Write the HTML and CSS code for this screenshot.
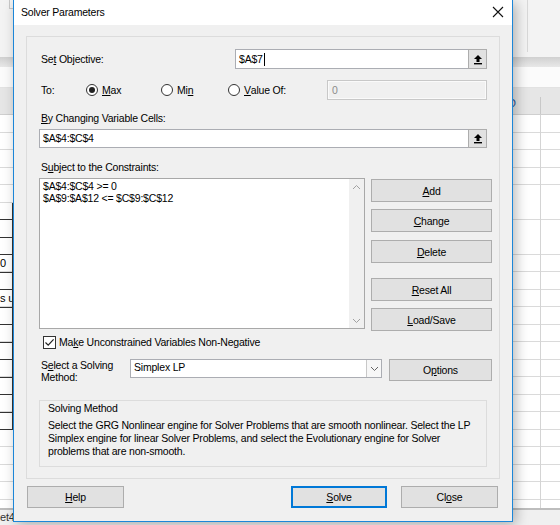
FILE: index.html
```html
<!DOCTYPE html>
<html lang="en">
<head>
    <meta charset="UTF-8">
    <title>Solver Parameters</title>
    <link rel="stylesheet" href="styles.css">
</head>
<body>

    <!-- excel window behind the dialog -->
    <div class="excel">
        <div class="ribbon"><span class="ribbon-corner"></span><span class="ribbon-sep"></span></div>
        <div class="ribbon-edge"></div>
        <div class="formula-bar"></div>
        <div class="col-head"><span class="col-letter">D</span></div>
        <div class="grid">
            <div class="left-cells">
                <div class="cell"></div>
                <div class="cell"></div>
                <div class="cell"></div>
                <div class="cell"></div>
                <div class="cell"></div>
                <div class="cell dark"></div>
                <div class="cell dark"></div>
                <div class="cell dark"></div>
                <div class="cell dark">0</div>
                <div class="cell dark"></div>
                <div class="cell dark">s u</div>
                <div class="cell dark"></div>
                <div class="cell dark"></div>
                <div class="cell dark"></div>
                <div class="cell dark"></div>
                <div class="cell dark"></div>
                <div class="cell dark"></div>
                <div class="cell dark"></div>
            </div>
        </div>
        <div class="tabs"><span class="tab-text">et4</span></div>
    </div>

    <div class="dialog">
        <div class="titlebar">
            <span class="title">Solver Parameters</span>
            <svg class="close" width="12" height="12" viewBox="0 0 12 12">
                <path d="M1 1 L11 11 M11 1 L1 11" stroke="#111" stroke-width="1.1" fill="none"/>
            </svg>
        </div>

        <div class="dlg-body">
            <div class="frame">

                <div class="row row-objective">
                    <span class="lbl w-objective">Se<u>t</u> Objective:</span>
                    <div class="ref-input w-objective-input">
                        <span class="ref-val">$A$7</span><span class="caret"></span>
                        <span class="collapse">
                            <svg width="10" height="11" viewBox="0 0 10 11">
                                <path d="M5 1 L9 5 L6.5 5 L6.5 8 L3.5 8 L3.5 5 L1 5 Z" fill="#000"/>
                                <rect x="1" y="9" width="8" height="1.4" fill="#000"/>
                            </svg>
                        </span>
                    </div>
                </div>

                <div class="row row-to">
                    <span class="lbl w-to">To:</span>
                    <span class="opt w-max"><span class="radio checked"></span><u>M</u>ax</span>
                    <span class="opt w-min"><span class="radio"></span>Mi<u>n</u></span>
                    <span class="opt w-value"><span class="radio"></span><u>V</u>alue Of:</span>
                    <div class="value-input">0</div>
                </div>

                <div class="lbl lbl-by"><u>B</u>y Changing Variable Cells:</div>
                <div class="ref-input w-changing">
                    <span class="ref-val">$A$4:$C$4</span>
                    <span class="collapse">
                        <svg width="10" height="11" viewBox="0 0 10 11">
                            <path d="M5 1 L9 5 L6.5 5 L6.5 8 L3.5 8 L3.5 5 L1 5 Z" fill="#000"/>
                            <rect x="1" y="9" width="8" height="1.4" fill="#000"/>
                        </svg>
                    </span>
                </div>

                <div class="lbl lbl-subject">S<u>u</u>bject to the Constraints:</div>
                <div class="constraints">
                    <div class="listbox">
                        <div class="list-lines">
                            <div>$A$4:$C$4 &gt;= 0</div>
                            <div>$A$9:$A$12 &lt;= $C$9:$C$12</div>
                        </div>
                        <div class="scrollbar">
                            <svg width="9" height="6" viewBox="0 0 9 6"><path d="M1 5 L4.5 1.5 L8 5" stroke="#a0a0a0" fill="none"/></svg>
                            <svg width="9" height="6" viewBox="0 0 9 6"><path d="M1 1 L4.5 4.5 L8 1" stroke="#a0a0a0" fill="none"/></svg>
                        </div>
                    </div>
                    <div class="side-buttons">
                        <button class="btn b-add"><u>A</u>dd</button>
                        <button class="btn b-change"><u>C</u>hange</button>
                        <button class="btn b-delete"><u>D</u>elete</button>
                        <button class="btn b-reset"><u>R</u>eset All</button>
                        <button class="btn b-load"><u>L</u>oad/Save</button>
                    </div>
                </div>

                <div class="check-row">
                    <span class="checkbox">
                        <svg width="11" height="11" viewBox="0 0 11 11"><path d="M1.5 5.5 L4.2 8.2 L9.6 2.4" stroke="#222" stroke-width="1.2" fill="none"/></svg>
                    </span>
                    Ma<u>k</u>e Unconstrained Variables Non-Negative
                </div>

                <div class="method-row">
                    <span class="lbl method-lbl">S<u>e</u>lect a Solving<br>Method:</span>
                    <div class="select">
                        <span class="select-val">Simplex LP</span>
                        <span class="select-arrow">
                            <svg width="9" height="6" viewBox="0 0 9 6"><path d="M1 1 L4.5 4.5 L8 1" stroke="#666" fill="none"/></svg>
                        </span>
                    </div>
                    <button class="btn b-options">O<u>p</u>tions</button>
                </div>

                <div class="group">
                    <div class="group-title">Solving Method</div>
                    <p class="group-text">Select the GRG Nonlinear engine for Solver Problems that are smooth nonlinear. Select the LP<br>Simplex engine for linear Solver Problems, and select the Evolutionary engine for Solver<br>problems that are non-smooth.</p>
                </div>

            </div>

            <div class="bottom-row">
                <button class="btn b-help"><u>H</u>elp</button>
                <button class="btn b-solve"><u>S</u>olve</button>
                <button class="btn b-close">Cl<u>o</u>se</button>
            </div>
        </div>
    </div>

</body>
</html>
```

FILE: styles.css
```css
* {
    box-sizing: border-box;
}
body {
    margin: 0;
    width: 560px;
    height: 525px;
    overflow: hidden;
    position: relative;
    font-family: 'Liberation Sans', Arial, sans-serif;
    font-size: 10.5px;
    letter-spacing: -0.2px;
    color: #000;
    background: #fff;
}
u {
    text-decoration: underline;
    text-underline-offset: 1px;
}

/* Excel behind */
.excel {
    height: 525px;
    display: flex;
    flex-direction: column;
}
.ribbon {
    height: 57px;
    background: #f3f3f3;
    display: flex;
}
.ribbon-corner {
    width: 4px;
    height: 9px;
    margin-left: 9px;
    border: 1px solid #c8c8c8;
    border-top: none;
    border-right: none;
}
.ribbon-sep {
    margin-left: 514px;
    width: 1px;
    height: 52px;
    background: #d8d8d8;
}
.ribbon-edge {
    height: 10px;
    background: linear-gradient(#d0d0d0, #e8e8e8);
}
.formula-bar {
    height: 21px;
    background: #fbfbfb;
    border-bottom: 1px solid #e2e2e2;
}
.col-head {
    height: 27px;
    background: #e6e6e6;
    border-bottom: 1px solid #cfcfcf;
    padding: 9px 0 0 508px;
    background-image: linear-gradient(to right, transparent 540px, #c8c8c8 540px, #c8c8c8 541px, transparent 541px);
    background-position: 0 9px;
    background-repeat: no-repeat;
}
.col-letter {
    color: #2b579a;
    font-size: 11px;
}
.grid {
    flex: 1;
    background:
        linear-gradient(to right, transparent 540px, #d4d4d4 540px, #d4d4d4 541px, transparent 541px),
        repeating-linear-gradient(to bottom, #fff 0, #fff 16.5px, #dadada 16.5px, #dadada 17.5px);
}
.left-cells {
    width: 13px;
}
.cell {
    height: 17.5px;
    border-bottom: 1px solid #dadada;
    font-size: 11px;
    line-height: 16px;
    white-space: nowrap;
    overflow: hidden;
}
.cell.dark {
    border-bottom-color: #333;
    border-right: 1px solid #333;
}
.tabs {
    height: 17px;
    background: #f0f0f0;
    border-top: 2px solid #bdbdbd;
    font-size: 11px;
    line-height: 14px;
    color: #333;
}

/* Dialog */
.dialog {
    position: absolute;
    left: 13px;
    top: 0;
    width: 500px;
    height: 522px;
    background: #f0f0f0;
    border: 1px solid #1c86d8;
    border-top: none;
    box-shadow: 3px 3px 12px rgba(0,0,0,0.28);
}
.titlebar {
    height: 25px;
    background: #fff;
    display: flex;
    align-items: center;
    padding: 0 8px 2px 7px;
}
.title {
    flex: 1;
}
.dlg-body {
    padding: 11px 12px 0;
}
.frame {
    height: 443px;
    border: 1px solid #dcdcdc;
    padding: 12px 0 0 12px;
}
.row {
    display: flex;
    align-items: center;
    height: 20px;
}
.lbl {
    padding-left: 2px;
    line-height: 13px;
}
.w-objective {
    width: 196px;
}
.ref-input {
    display: flex;
    align-items: center;
    background: #fff;
    border: 1px solid #abadb3;
    height: 20px;
    padding-left: 3px;
}
.w-objective-input {
    width: 252px;
}
.ref-val {
    line-height: 13px;
}
.caret {
    width: 1px;
    height: 13px;
    background: #000;
    margin-left: 1px;
}
.collapse {
    margin-left: auto;
    width: 19px;
    height: 20px;
    margin-right: -1px;
    background: #e1e1e1;
    border: 1px solid #adadad;
    display: flex;
    align-items: center;
    justify-content: center;
}

.row-to {
    margin-top: 11px;
}
.w-to {
    width: 47px;
}
.opt {
    display: flex;
    align-items: center;
}
.w-max {
    width: 75px;
}
.w-min {
    width: 67px;
}
.w-value {
    width: 99px;
}
.radio {
    width: 12px;
    height: 12px;
    border: 1px solid #333;
    border-radius: 50%;
    background: #fff;
    margin-right: 4px;
    display: flex;
    align-items: center;
    justify-content: center;
}
.radio.checked::after {
    content: "";
    width: 6px;
    height: 6px;
    border-radius: 50%;
    background: #222;
}
.value-input {
    width: 160px;
    height: 20px;
    border: 1px solid #c8c8c8;
    background: #f0f0f0;
    box-shadow: inset 0 0 0 1px #fafafa;
    color: #8c8c8c;
    padding: 3px 0 0 4px;
    line-height: 13px;
}

.lbl-by {
    margin-top: 12px;
    height: 15px;
}
.w-changing {
    margin-top: 2px;
    width: 448px;
    height: 19px;
}
.w-changing .collapse {
    height: 19px;
}
.lbl-subject {
    margin-top: 13px;
    height: 15px;
}

.constraints {
    margin-top: 2px;
    display: flex;
}
.listbox {
    width: 326px;
    height: 151px;
    border: 1px solid #a8a8a8;
    background: #fff;
    display: flex;
}
.list-lines {
    flex: 1;
    padding: 1px 3px;
    line-height: 12px;
}
.scrollbar {
    width: 15px;
    background: #f0f0f0;
    display: flex;
    flex-direction: column;
    justify-content: space-between;
    align-items: center;
    padding: 5px 0 4px;
}
.side-buttons {
    margin-left: 6px;
    width: 121px;
    display: flex;
    flex-direction: column;
}
.btn {
    font-family: inherit;
    font-size: 10.5px;
    letter-spacing: inherit;
    color: #000;
    background: #e1e1e1;
    border: 1px solid #adadad;
    height: 23px;
    padding: 0;
    margin: 0;
}
.b-add {
    margin-top: 1px;
}
.b-change {
    margin-top: 7px;
}
.b-delete {
    margin-top: 8px;
}
.b-reset {
    margin-top: 15px;
}
.b-load {
    margin-top: 7px;
}

.check-row {
    margin-top: 3px;
    height: 16px;
    display: flex;
    align-items: center;
    padding-left: 4px;
}
.checkbox {
    width: 13px;
    height: 13px;
    border: 1px solid #333;
    background: #fff;
    margin-right: 3px;
    display: flex;
    align-items: center;
    justify-content: center;
}

.method-row {
    margin-top: 9px;
    height: 22px;
    display: flex;
    align-items: flex-start;
}
.method-lbl {
    width: 91px;
    line-height: 12px;
    padding-top: 0;
}
.select {
    width: 252px;
    height: 19px;
    background: #fff;
    border: 1px solid #abadb3;
    display: flex;
    align-items: center;
    padding-left: 3px;
}
.select-val {
    flex: 1;
    line-height: 13px;
    margin-top: -2px;
}
.select-arrow {
    width: 15px;
    height: 17px;
    border-left: 1px solid #c8c8c8;
    background: #f7f7f7;
    display: flex;
    align-items: center;
    justify-content: center;
}
.b-options {
    margin-left: 7px;
    width: 103px;
    height: 22px;
}

.group {
    margin-top: 19px;
    width: 448px;
    height: 67px;
    border: 1px solid #dcdcdc;
    padding: 1px 0 0 8px;
    line-height: 13px;
}
.group-title {
    height: 13px;
}
.group-text {
    margin: 4px 0 0;
    white-space: nowrap;
}

.bottom-row {
    margin-top: 7px;
    display: flex;
}
.b-help {
    margin-left: 1px;
    width: 97px;
    height: 22px;
}
.b-solve {
    margin-left: 167px;
    width: 96px;
    height: 22px;
    border: 2px solid #0078d7;
}
.b-close {
    margin-left: 14px;
    width: 97px;
    height: 22px;
}
```
